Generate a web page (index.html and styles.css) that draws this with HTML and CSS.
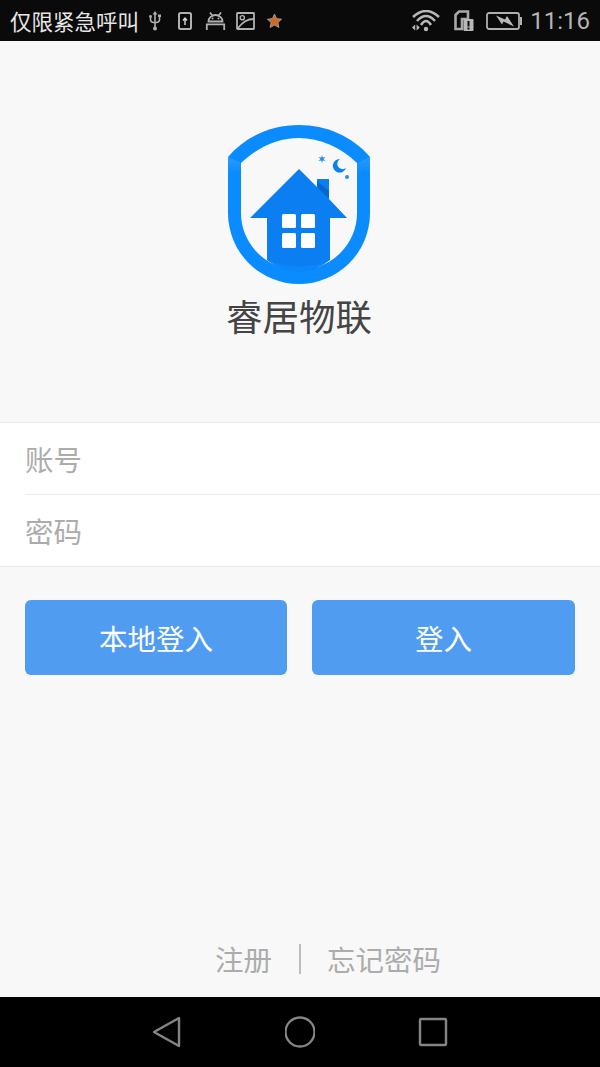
FILE: index.html
```html
<!DOCTYPE html>
<html lang="zh-CN">
<head>
    <meta charset="UTF-8">
    <meta name="viewport" content="width=device-width, initial-scale=1.0">
    <title>睿居物联</title>
    <link rel="stylesheet" href="styles.css">
</head>
<body>
    <div class="screen">
        <div class="status-bar">
            <div class="status-left">
                <span class="carrier">仅限紧急呼叫</span>
                <svg class="ic-usb" width="14" height="22" viewBox="0 0 14 22" fill="none" stroke="#b0b0b0" stroke-width="1.6">
                    <path d="M7 3V19M2.500 7v2.500a3 3 0 0 0 3 3H7M11.500 6v3.500a3 3 0 0 1-3 3H7"/>
                    <circle cx="7" cy="18.500" r="2" fill="#b0b0b0" stroke="none"/>
                    <circle cx="2.500" cy="6.500" r="1.400" fill="#b0b0b0" stroke="none"/>
                    <rect x="10" y="4.500" width="3" height="2.500" fill="#b0b0b0" stroke="none"/>
                    <path d="M7 1l2.500 3.500h-5z" fill="#b0b0b0" stroke="none"/>
                </svg>
                <svg class="ic-up" width="14" height="18" viewBox="0 0 14 18" fill="none" stroke="#b0b0b0" stroke-width="2">
                    <rect x="1" y="1" width="12" height="16" rx="1.500"/>
                    <path d="M7 13V6.500M5 8.500L7 6l2 2.500" stroke="#d8d8d8" stroke-width="1.400"/>
                </svg>
                <svg class="ic-android" width="21" height="18" viewBox="0 0 21 18" fill="none" stroke="#b0b0b0" stroke-width="1.800">
                    <path d="M3.500 9.500a7 6.500 0 0 1 14 0zM1 12.300h19M1.800 12v6M19.200 12v6M5 .5l2.200 3M16 .5l-2.200 3"/>
                    <circle cx="7.500" cy="6.500" r="1" fill="#b0b0b0" stroke="none"/>
                    <circle cx="13.500" cy="6.500" r="1" fill="#b0b0b0" stroke="none"/>
                </svg>
                <svg class="ic-image" width="19" height="18" viewBox="0 0 19 18" fill="none" stroke="#b0b0b0" stroke-width="1.800">
                    <rect x="1" y="1" width="17" height="16" rx=".5"/>
                    <path d="M2 16C7 10 11 7 18 7"/>
                    <circle cx="6.300" cy="5.700" r="2.100" stroke-width="1.400"/>
                </svg>
                <svg class="ic-star" width="17" height="16" viewBox="0 0 16 16">
                    <path d="M8 1l2.100 4.600 5 .6-3.700 3.400 1 4.900L8 12.100l-4.400 2.400 1-4.900L.9 6.200l5-.6z" fill="#d06a20" stroke="#a8a8a8" stroke-width=".8"/>
                </svg>
            </div>
            <div class="status-right">
                <svg width="30" height="22" viewBox="0 0 30 22" fill="none" stroke="#b8b8b8" stroke-width="2.400">
                    <path d="M2 7Q15 -5 28 7M6 11Q15 1 24 11M10 15Q15 7 20 15"/>
                    <circle cx="15" cy="19" r="2.200" fill="#b8b8b8" stroke="none"/>
                    <path d="M4.200 14.500L1 17.500l3.200 3zM5.600 14.500l3.200 3-3.200 3z" fill="#b8b8b8" stroke="none"/>
                </svg>
                <svg class="ic-sim" width="20" height="22" viewBox="0 0 20 22">
                    <path d="M1.500 5l3.500-3.500h9V9H8v10H1.500z" fill="none" stroke="#a8a8a8" stroke-width="2.600"/>
                    <rect x="9.500" y="9" width="10" height="12" rx="1" fill="#b8b8b8"/>
                    <path d="M14.500 11v5.500M14.500 17.500v2" stroke="#0a0a0a" stroke-width="2"/>
                </svg>
                <svg class="ic-battery" width="37" height="18" viewBox="0 0 37 18">
                    <rect x="1" y="1" width="32" height="16" rx="2" fill="none" stroke="#b0b0b0" stroke-width="1.800"/>
                    <rect x="34" y="5" width="2" height="8" fill="#b0b0b0"/>
                    <path d="M10 3.500L19 7.500 21 4 28 14.500 17.500 9.500 16 12.500Z" fill="#b8b8b8"/>
                </svg>
                <span class="clock">11:16</span>
            </div>
        </div>

        <div class="content">
            <div class="hero">
                <svg class="logo" width="143" height="160" viewBox="0 0 143 160">
                    <defs>
                        <linearGradient id="facet" x1="0" y1="0" x2="0" y2="1">
                            <stop offset="0" stop-color="#2a9bff"/>
                            <stop offset="1" stop-color="#0a8cff"/>
                        </linearGradient>
                    </defs>
                    <path d="M0 32C18 11 44 0 71 0S124 11 142 32V88A71 71 0 0 1 0 88Z" fill="#0a8cff"/>
                    <path d="M13 38C30 22 50 13 71 13S112 22 129 38V88A58 57 0 0 1 13 88Z" fill="#f8f8f8"/>
                    <path d="M0 32L13 38V48H0Z" fill="url(#facet)"/>
                    <path d="M142 32L129 38V48H142Z" fill="url(#facet)"/>
                    <path d="M39 93H22L71 44 89 62V54H101V74L119 93H102V135Q71 158 39 135Z" fill="#0b7ff2"/>
                    <path d="M39 135Q71 148 102 135Q71 158 39 135Z" fill="#0a88fa"/>
                    <path d="M89 62V56L101 66V74Z" fill="#0468d2"/>
                    <g fill="#fff">
                        <rect x="54" y="89" width="14" height="14" rx="1.500"/>
                        <rect x="73" y="89" width="14" height="14" rx="1.500"/>
                        <rect x="54" y="108" width="14" height="15" rx="1.500"/>
                        <rect x="73" y="108" width="14" height="15" rx="1.500"/>
                    </g>
                    <path d="M112 34A6.800 6.800 0 1 0 118 43A5.420 5.420 0 1 1 112 34Z" fill="#0a80f0"/>
                    <path d="M94 30l.8 2.600 2.700-.7-1.900 2.100 1.900 2.100-2.700-.7-.8 2.600-.8-2.600-2.700.7 1.900-2.100-1.900-2.100 2.700.7z" fill="#2a8fe8"/>
                    <circle cx="119" cy="52" r="2" fill="#2a8fe8"/>
                </svg>
                <h1 class="brand">睿居物联</h1>
            </div>

            <div class="form">
                <div class="form-row"><input type="text" placeholder="账号"></div>
                <div class="form-row"><input type="password" placeholder="密码"></div>
            </div>

            <div class="actions">
                <button class="btn">本地登入</button>
                <button class="btn">登入</button>
            </div>

            <div class="links">
                <a class="link link-left">注册</a>
                <span class="sep"></span>
                <a class="link">忘记密码</a>
            </div>
        </div>

        <div class="nav-bar">
            <svg width="30" height="32" viewBox="0 0 30 32" fill="none" stroke="#858585" stroke-width="2.400" stroke-linejoin="round">
                <path d="M27 2V30L2 16Z"/>
            </svg>
            <svg width="30" height="32" viewBox="0 0 30 32" fill="none" stroke="#858585" stroke-width="2.400">
                <circle cx="15" cy="16" r="14.500"/>
            </svg>
            <svg width="30" height="32" viewBox="0 0 30 32" fill="none" stroke="#858585" stroke-width="2.400" stroke-linejoin="round">
                <rect x="2" y="3" width="26" height="26" rx="1"/>
            </svg>
        </div>
    </div>
</body>
</html>
```

FILE: styles.css
```css
* {
    box-sizing: border-box;
}
body {
    margin: 0;
    font-family: "Noto Sans CJK SC", "Noto Sans", sans-serif;
}
.screen {
    display: flex;
    flex-direction: column;
    width: 600px;
    height: 1067px;
    overflow: hidden;
    background-color: #f8f8f8;
}
.status-bar {
    display: flex;
    justify-content: space-between;
    align-items: center;
    height: 41px;
    padding: 1px 10px 0;
    background-color: #0a0a0a;
}
.status-left,
.status-right {
    display: flex;
    align-items: center;
}
.carrier {
    width: 131px;
    font-size: 21.5px;
    line-height: 40px;
    color: #e6e6e6;
    white-space: nowrap;
}
.ic-usb {
    margin-left: 7px;
}
.ic-up {
    margin-left: 16px;
}
.ic-android {
    margin-left: 13px;
}
.ic-image {
    margin-left: 10px;
}
.ic-star {
    margin-left: 11px;
}
.ic-sim {
    margin-left: 13px;
}
.ic-battery {
    margin-left: 12px;
}
.clock {
    margin-left: 7px;
    font-family: Roboto, sans-serif;
    font-size: 24px;
    color: #b5b5b5;
}
.content {
    display: flex;
    flex: 1;
    flex-direction: column;
}
.hero {
    display: flex;
    flex-direction: column;
    align-items: center;
    height: 381px;
    padding-top: 84px;
}
.logo {
    display: block;
    margin-right: 1px;
}
.brand {
    margin: 11px 2px 0 0;
    font-size: 36.5px;
    font-weight: 400;
    line-height: 40px;
    color: #444;
}
.form {
    padding-left: 25px;
    background-color: #fff;
    border-top: 1px solid #ececec;
    border-bottom: 1px solid #e8e8e8;
}
.form-row {
    height: 71px;
}
.form-row + .form-row {
    height: 72px;
    border-top: 1px solid #ececec;
}
.form-row input {
    display: block;
    width: 100%;
    height: 100%;
    padding: 0;
    font-family: inherit;
    font-size: 28.5px;
    background: none;
    border: none;
    outline: none;
}
.form-row input::placeholder {
    color: #acacac;
    opacity: 1;
}
.actions {
    display: grid;
    grid-template-columns: 262px 263px;
    gap: 25px;
    margin-top: 33px;
    padding: 0 25px;
}
.btn {
    height: 75px;
    padding: 0;
    font-family: inherit;
    font-size: 28.5px;
    color: #fff;
    background-color: #4f9cf1;
    border: none;
    border-radius: 6px;
    cursor: pointer;
}
.links {
    display: grid;
    grid-template-columns: 1fr auto 1fr;
    gap: 26px;
    align-items: center;
    margin-top: auto;
    padding-bottom: 23px;
}
.link {
    font-size: 28.5px;
    line-height: 30px;
    color: #acacac;
}
.link-left {
    justify-self: end;
    margin-right: 1px;
}
.sep {
    width: 2px;
    height: 30px;
    background-color: #bdbdbd;
}
.nav-bar {
    display: flex;
    justify-content: center;
    align-items: center;
    gap: 103px;
    height: 70px;
    background-color: #000;
}
```
